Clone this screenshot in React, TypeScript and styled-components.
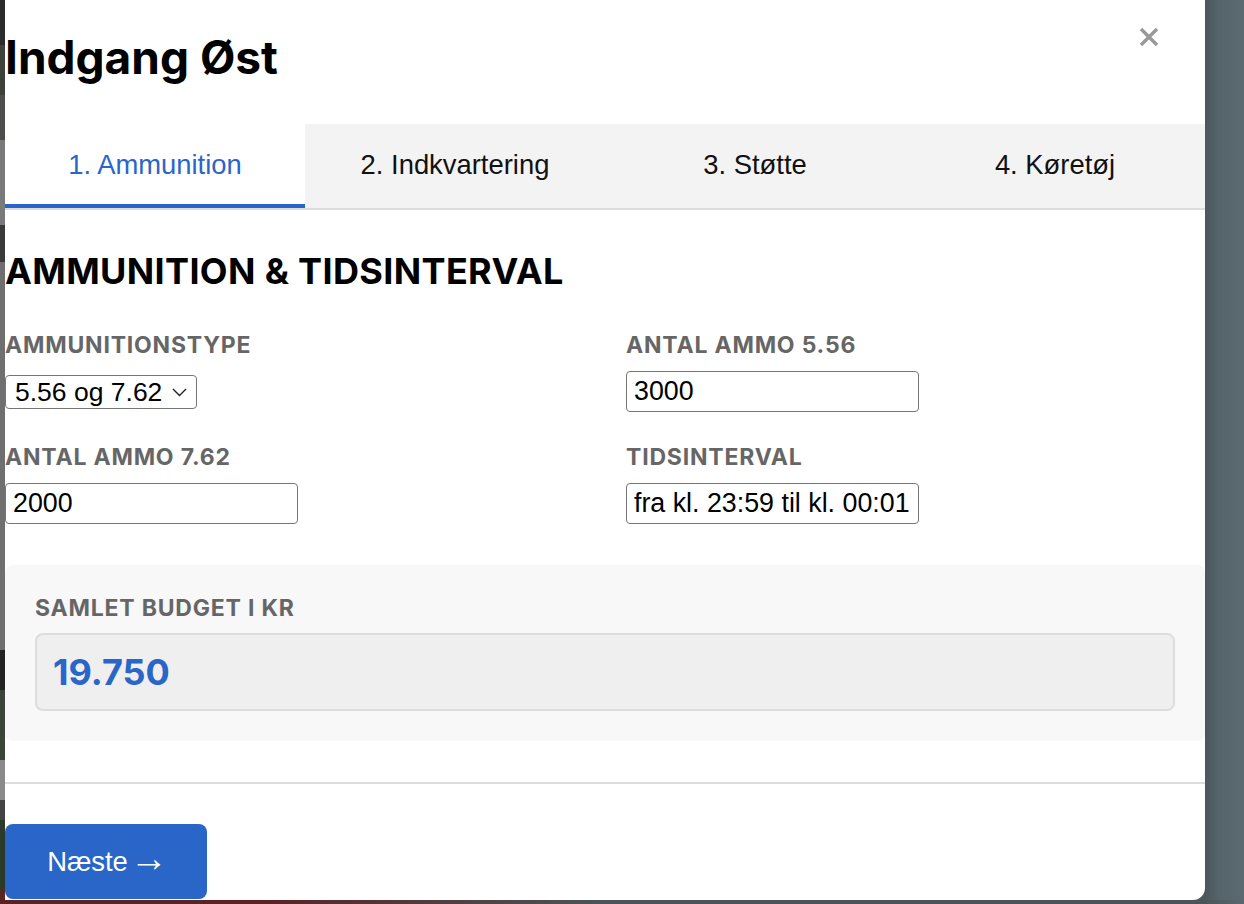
import React from "react";
import styled, { createGlobalStyle } from "styled-components";

const Global = createGlobalStyle`
  html, body { margin: 0; padding: 0; }
  body {
    width: 1244px;
    height: 904px;
    overflow: hidden;
    background: #56656b;
    font-family: Inter, "Liberation Sans", Arial, sans-serif;
  }
  * { box-sizing: border-box; }
`;

const Page = styled.div`
  display: flex;
  flex-direction: column;
  width: 1244px;
  height: 904px;
  background: linear-gradient(90deg, #4b575c 1205px, #5a696f 1244px);
`;

const Stage = styled.div`
  display: flex;
  height: 900px;
`;

const LeftStrip = styled.div`
  width: 5px;
  flex: none;
  background: linear-gradient(
    180deg,
    #2b2b2b 0px, #2b2b2b 45px,
    #3c413a 45px, #3c413a 95px,
    #4b4e49 95px, #4b4e49 140px,
    #7a7a7a 140px, #7a7a7a 225px,
    #3a3a3a 225px, #3a3a3a 262px,
    #6f6f6f 262px, #6f6f6f 650px,
    #232323 650px, #232323 690px,
    #3b4438 690px, #3b4438 760px,
    #8a8a8a 760px, #8a8a8a 800px,
    #444444 800px, #444444 820px,
    #2c3a28 820px, #2c3a28 890px,
    #5a2424 890px
  );
`;

const Backdrop = styled.div`
  flex: 1;
  background: linear-gradient(90deg, #4a565b 0px, #56656b 14px, #5b6a70 39px);
`;

const BottomStrip = styled.div`
  height: 4px;
  background: linear-gradient(90deg, #5a2222 0px, #5a2222 260px, #4a5559 600px, #4a5559 1205px, #5a696f 1244px);
`;

const Modal = styled.div`
  position: relative;
  width: 1200px;
  height: 900px;
  flex: none;
  background: #ffffff;
  border-radius: 0 0 12px 0;
  overflow: hidden;
  display: flex;
  flex-direction: column;
`;

const Header = styled.header`
  height: 124px;
  padding-top: 29px;
  flex: none;
`;

const Title = styled.h1`
  margin: 0;
  font-family: Inter, "Liberation Sans", sans-serif;
  font-weight: 700;
  font-size: 46px;
  line-height: 56px;
  color: #000;
  letter-spacing: 0px;
`;

const CloseButton = styled.button`
  position: absolute;
  top: 26px;
  right: 45px;
  width: 22px;
  height: 22px;
  padding: 0;
  border: none;
  background: transparent;
  display: flex;
  align-items: center;
  justify-content: center;
  cursor: pointer;
`;

const TabBar = styled.nav`
  display: grid;
  grid-template-columns: repeat(4, 1fr);
  height: 86px;
  flex: none;
  background: #f3f3f3;
  border-bottom: 2px solid #dddddd;
`;

const Tab = styled.button<{ $active?: boolean }>`
  border: none;
  margin: 0;
  padding: 0;
  background: ${(p) => (p.$active ? "#ffffff" : "transparent")};
  border-bottom: 4px solid ${(p) => (p.$active ? "#2a66c8" : "transparent")};
  color: ${(p) => (p.$active ? "#2a66c8" : "#111111")};
  font-family: "Liberation Sans", Arial, sans-serif;
  font-size: 27.4px;
  display: flex;
  align-items: center;
  justify-content: center;
  padding-top: 1px;
`;

const Body = styled.main`
  display: flex;
  flex-direction: column;
  padding-top: 41px;
`;

const SectionTitle = styled.h2`
  margin: 0;
  font-family: Inter, "Liberation Sans", sans-serif;
  font-weight: 700;
  font-size: 36px;
  line-height: 40px;
  color: #000;
  letter-spacing: 0.36px;
`;

const FormGrid = styled.div`
  display: grid;
  grid-template-columns: 1fr 1fr;
  column-gap: 42px;
  row-gap: 32px;
  margin-top: 41px;
`;

const Field = styled.div`
  display: flex;
  flex-direction: column;
  align-items: flex-start;
  gap: 13px;
`;

const Label = styled.label`
  font-family: Inter, "Liberation Sans", sans-serif;
  font-weight: 700;
  font-size: 23px;
  line-height: 26px;
  color: #666666;
  letter-spacing: 0.8px;
`;

const SelectWrap = styled.div`
  position: relative;
  margin: 4px 0 3px;
`;

const Select = styled.select`
  appearance: none;
  -webkit-appearance: none;
  width: 192px;
  height: 34px;
  padding: 0 0 0 9px;
  margin: 0;
  border: 1px solid #767676;
  border-radius: 4px;
  background: #ffffff;
  color: #000;
  font-family: "Liberation Sans", Arial, sans-serif;
  font-size: 26.5px;
`;

const Chevron = styled.svg`
  position: absolute;
  right: 10px;
  top: 13px;
  pointer-events: none;
`;

const TextInput = styled.input`
  width: 293px;
  height: 41px;
  margin: 0;
  padding: 0 7px;
  border: 1px solid #767676;
  border-radius: 4px;
  background: #ffffff;
  color: #000;
  font-family: "Liberation Sans", Arial, sans-serif;
  font-size: 26.8px;
`;

const BudgetBox = styled.section`
  margin-top: 41px;
  padding: 30px;
  background: #f8f8f8;
  border-radius: 8px;
  display: flex;
  flex-direction: column;
  gap: 12px;
`;

const BudgetValue = styled.div`
  height: 78px;
  display: flex;
  align-items: center;
  padding: 0 16px;
  background: #efefef;
  border: 2px solid #dddddd;
  border-radius: 8px;
  font-family: Inter, "Liberation Sans", sans-serif;
  font-weight: 700;
  font-size: 36px;
  color: #2a66c8;
`;

const Divider = styled.hr`
  margin: 41px 0 0;
  border: none;
  height: 2px;
  background: #dddddd;
`;

const Footer = styled.footer`
  padding-top: 40px;
  display: flex;
`;

const PrimaryButton = styled.button`
  width: 202px;
  height: 75px;
  border: none;
  border-radius: 8px;
  background: #2a66c8;
  color: #ffffff;
  font-family: "Liberation Sans", Arial, sans-serif;
  font-size: 27.4px;
  line-height: 1;
  padding: 0 0 0 3px;
  display: flex;
  align-items: center;
  justify-content: center;
  gap: 2px;
  cursor: pointer;
`;

const Arrow = styled.span`
  font-size: 38px;
  line-height: 1;
  position: relative;
  top: -4px;
`;

const tabs = ["1. Ammunition", "2. Indkvartering", "3. Støtte", "4. Køretøj"];

export default function App() {
  return (
    <>
      <Global />
      <Page>
        <Stage>
          <LeftStrip />
          <Modal>
            <Header>
              <Title>Indgang Øst</Title>
            </Header>
            <CloseButton aria-label="Luk">
              <svg width="20" height="20" viewBox="0 0 20 20">
                <path d="M2 2 L18 18 M18 2 L2 18" stroke="#999999" strokeWidth="3.4" strokeLinecap="butt" />
              </svg>
            </CloseButton>
            <TabBar>
              {tabs.map((t, i) => (
                <Tab key={t} $active={i === 0}>
                  {t}
                </Tab>
              ))}
            </TabBar>
            <Body>
              <SectionTitle>AMMUNITION &amp; TIDSINTERVAL</SectionTitle>
              <FormGrid>
                <Field>
                  <Label>AMMUNITIONSTYPE</Label>
                  <SelectWrap>
                    <Select defaultValue="both">
                      <option value="both">5.56 og 7.62</option>
                    </Select>
                    <Chevron width="15" height="9" viewBox="0 0 15 9">
                      <path d="M1 1 L7.5 7.5 L14 1" fill="none" stroke="#222" strokeWidth="1.4" />
                    </Chevron>
                  </SelectWrap>
                </Field>
                <Field>
                  <Label>ANTAL AMMO 5.56</Label>
                  <TextInput defaultValue="3000" />
                </Field>
                <Field>
                  <Label>ANTAL AMMO 7.62</Label>
                  <TextInput defaultValue="2000" />
                </Field>
                <Field>
                  <Label>TIDSINTERVAL</Label>
                  <TextInput defaultValue="fra kl. 23:59 til kl. 00:01" />
                </Field>
              </FormGrid>
              <BudgetBox>
                <Label>SAMLET BUDGET I KR</Label>
                <BudgetValue>19.750</BudgetValue>
              </BudgetBox>
              <Divider />
              <Footer>
                <PrimaryButton>
                  <span>Næste</span>
                  <Arrow>→</Arrow>
                </PrimaryButton>
              </Footer>
            </Body>
          </Modal>
          <Backdrop />
        </Stage>
        <BottomStrip />
      </Page>
    </>
  );
}
